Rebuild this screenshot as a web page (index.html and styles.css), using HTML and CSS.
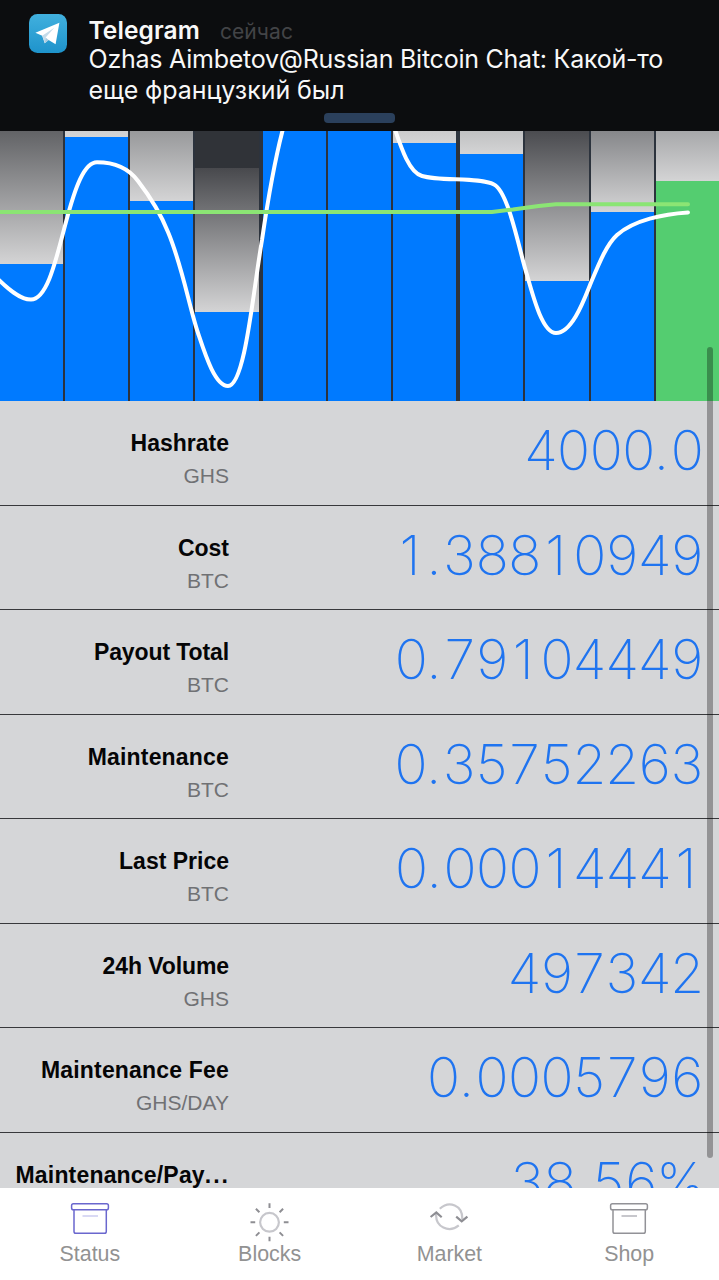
FILE: index.html
```
<!DOCTYPE html>
<html lang="en">
<head>
<meta charset="utf-8">
<title>Status</title>
<link rel="stylesheet" href="styles.css">
</head>
<body>
<div class="screen">
  <header class="notice">
    <svg class="notice-icon" viewBox="0 0 38 39">
      <defs><linearGradient id="sky" x1="0" y1="0" x2="0" y2="1"><stop offset="0" stop-color="#41b0de"/><stop offset="1" stop-color="#1e93cb"/></linearGradient></defs>
      <rect width="38" height="39" rx="8.5" fill="url(#sky)"/>
      <path d="M6.4 18.7 L30.4 8.8 L26.6 30.3 L19.6 26 L15.8 29.3 L13.2 21.7 Z" fill="#fff"/>
      <path d="M13.2 21.7 L25.3 13.7 L16.6 23.5 L15.8 29.3 Z" fill="#c5dcea"/>
      <path d="M16.6 23.5 L15.8 29.3 L19.6 26 Z" fill="#a7cadf"/>
    </svg>
    <div class="notice-body">
      <div class="notice-head"><span class="app">Telegram</span><span class="when">сейчас</span></div>
      <div class="line line-a">Ozhas Aimbetov@Russian Bitcoin Chat: Какой-то</div>
      <div class="line line-b">еще французкий был</div>
    </div>
    <div class="grip"></div>
  </header>

  <main class="content">
    <section class="chart">
      <div class="col"><div class="fade" style="height:133px;--top:#626366"></div></div>
      <div class="col"><div class="fade" style="height:6px;--top:#d0d0d1"></div></div>
      <div class="col"><div class="fade" style="height:70px;--top:#98999b"></div></div>
      <div class="col wide-gap"><div class="empty" style="height:37px"></div><div class="fade" style="height:144px;--top:#48494d"></div></div>
      <div class="col"></div>
      <div class="col"></div>
      <div class="col wide-gap"><div class="fade" style="height:12px;--top:#cbcbcc"></div></div>
      <div class="col"><div class="fade" style="height:23px;--top:#c0c1c2"></div></div>
      <div class="col"><div class="fade" style="height:150px;--top:#4b4c50"></div></div>
      <div class="col"><div class="fade" style="height:81px;--top:#86878a"></div></div>
      <div class="col current"><div class="fade" style="height:50px;--top:#a7a8aa"></div></div>
      <svg class="curves" viewBox="0 131 719 270">
        <path class="rate" d="M-4 277 C8 289 20 299.5 31 299.5 C48 299.5 57 255 66 222 C75 188 84 162.3 97 162.3 C115 162.3 128 167.500 138 181 C148 194 160 212 168 232 C182 265 189 306 198 333 C205 354 215 386 228 386 C245 386 253 292 262 240 C269 192 276 152 286 118"/>
        <path class="rate" d="M391 118 C400 144 408 172 422 176 C440 181.500 480 177 494 184.500 C509 192 520 254 527 275 C534 300 543 333 556 333 C572 333 584 300 590 285 C598 266 606 245 617 235 C634 220 664 214 688 212.500"/>
        <path class="mean" d="M-4 212 H492 L513 209.500 Q535 206 556 204.300 H688"/>
      </svg>
    </section>

    <section class="stats">
      <div class="row"><div class="label"><b>Hashrate</b><span>GHS</span></div><div class="value">4000<i>.</i>0</div></div>
      <div class="row"><div class="label"><b>Cost</b><span>BTC</span></div><div class="value"><i class="one">1</i><i>.</i>388<i class="one">1</i>0949</div></div>
      <div class="row"><div class="label"><b class="snug">Payout Total</b><span>BTC</span></div><div class="value">0<i>.</i>79<i class="one">1</i>04449</div></div>
      <div class="row"><div class="label"><b class="loose">Maintenance</b><span>BTC</span></div><div class="value">0<i>.</i>35752263</div></div>
      <div class="row"><div class="label"><b>Last Price</b><span>BTC</span></div><div class="value">0<i>.</i>000<i class="one">1</i>444<i class="one">1</i></div></div>
      <div class="row"><div class="label"><b class="snug">24h Volume</b><span>GHS</span></div><div class="value">497342</div></div>
      <div class="row"><div class="label"><b class="loose">Maintenance Fee</b><span>GHS/DAY</span></div><div class="value">0<i>.</i>0005796</div></div>
      <div class="row"><div class="label"><b class="loose">Maintenance/Pay<span class="dots">...</span></b></div><div class="value">38<i>.</i>56%</div></div>
    </section>
    <div class="scrollbar"></div>
  </main>

  <nav class="tabs">
    <div class="tab active">
      <svg class="icon" viewBox="0 0 40 40"><g class="box"><rect x="1.600" y="1.700" width="36.800" height="6" rx="1.800"/><path d="M4 7.700 V29.500 Q4 31.300 5.800 31.300 H34.500 Q36.300 31.300 36.300 29.500 V7.700"/></g><path class="slot" d="M12.500 14 H28"/></svg>
      <span>Status</span>
    </div>
    <div class="tab">
      <svg class="icon" viewBox="0 0 40 40"><circle class="pale" cx="19.500" cy="20.300" r="9.400"/><path class="dark" d="M19.500 1.300 V6 M19.500 34.700 V39.300 M0.500 20.300 H5.200 M33.800 20.300 H38.500 M5.900 6.700 L9.400 10.200 M33.100 6.700 L29.600 10.200 M5.900 33.900 L9.400 30.400 M33.100 33.900 L29.600 30.400"/></svg>
      <span>Blocks</span>
    </div>
    <div class="tab">
      <svg class="icon" viewBox="0 0 40 40"><path class="pale" d="M10.800 6.800 C20 -2 34 3 33.200 17.500 M7.200 11.500 C6 25 20 31.500 29.800 23.300"/><path class="arrow" d="M1.600 15 L7.300 10.500 L12.700 15.300 M27.200 14.700 L32.700 19.300 L38.400 14.600"/></svg>
      <span>Market</span>
    </div>
    <div class="tab">
      <svg class="icon" viewBox="0 0 40 40"><g class="box"><rect x="1.600" y="1.700" width="36.800" height="6" rx="1.800"/><path d="M4 7.700 V29.500 Q4 31.300 5.800 31.300 H34.500 Q36.300 31.300 36.300 29.500 V7.700"/></g><path class="slot" d="M12.500 14 H28"/></svg>
      <span>Shop</span>
    </div>
  </nav>
</div>
</body>
</html>
```
FILE: styles.css
```
* { box-sizing: border-box; }
body { margin: 0; font-family: "Liberation Sans", Arial, sans-serif; }
.screen { width: 719px; height: 1280px; display: flex; flex-direction: column; overflow: hidden; background: #fff; }

.notice { position: relative; height: 131px; flex: none; display: flex; gap: 21.500px; padding: 14px 0 0 29px; background: #0c0d0f; color: #f8f8f8; font-family: Inter, sans-serif; }
.notice-icon { width: 38px; height: 39px; flex: none; }
.notice-body { white-space: nowrap; }
.notice-head { display: flex; gap: 20px; align-items: baseline; height: 30px; line-height: 32px; }
.app { font-size: 24.500px; font-weight: 600; letter-spacing: 0.100px; }
.when { font-size: 21px; color: #434447; letter-spacing: 0.100px; }
.line { font-size: 25px; line-height: 31px; }
.line-a { letter-spacing: -0.240px; }
.line-b { letter-spacing: -0.060px; }
.grip { position: absolute; left: 324px; top: 113px; width: 71px; height: 10px; border-radius: 4px; background: #2b405c; }

.content { position: relative; flex: 1; min-height: 0; overflow: hidden; background: #d5d6d8; }
.chart { position: relative; height: 270px; display: grid; grid-template-columns: 65px 65px 65px 68px 65px 65px 67px 65px 66px 65px 63px; background: #2c333d; overflow: hidden; }
.col { margin-right: 2px; background: #007aff; }
.wide-gap { margin-right: 4px; }
.current { margin-right: 0; background: #54cd70; }
.empty { background: #303338; }
.fade { background: linear-gradient(var(--top), #d4d4d5); }
.curves { position: absolute; inset: 0; width: 719px; height: 270px; }
.curves path { fill: none; stroke-width: 4; stroke-linecap: round; }
.rate { stroke: #fff; }
.mean { stroke: #8be574; }

.row { height: 104.570px; display: grid; grid-template-columns: 229px 1fr; border-bottom: 1px solid #38393c; padding-right: 17px; }
.label { display: flex; flex-direction: column; align-items: flex-end; padding-top: 28px; white-space: nowrap; }
.label b { font-size: 23px; line-height: 28px; color: #050506; }
.label b.snug { letter-spacing: -0.100px; }
.label b.loose { letter-spacing: 0.180px; }
.label > span { font-size: 21px; line-height: 28px; margin-top: 5px; color: #707174; }
.dots { letter-spacing: 2px; margin-right: -1px; }
.value { padding-top: 16px; text-align: right; font-family: Inter, sans-serif; font-weight: 200; font-variant-numeric: tabular-nums; font-size: 55px; letter-spacing: -3px; line-height: 67px; color: #1f74f0; white-space: nowrap; }
.value i { display: inline-block; width: 16px; font-style: normal; text-align: center; letter-spacing: 0; }
.value .one { width: 32.300px; font-variant-numeric: normal; }
.scrollbar { position: absolute; left: 707px; top: 216px; width: 6px; height: 811px; border-radius: 3px; background: rgba(0, 0, 0, 0.310); }

.tabs { height: 92px; flex: none; display: grid; grid-template-columns: repeat(4, 1fr); background: #fff; }
.tab { display: flex; flex-direction: column; align-items: center; padding-top: 14px; color: #929292; font-size: 21.400px; }
.tab span { line-height: 26px; margin-top: -1px; }
.icon { width: 40px; height: 40px; flex: none; fill: none; stroke-width: 1.500; }
.box { stroke: #929297; }
.slot { stroke: #b5b5bb; }
.active .box { stroke: #6a67ce; }
.active .slot { stroke: #cdccf0; }
.pale { stroke: #c7c7cc; stroke-width: 2.200; }
.dark { stroke: #8e8e93; stroke-width: 2; }
.arrow { stroke: #8e8e93; stroke-width: 2.200; }
```
